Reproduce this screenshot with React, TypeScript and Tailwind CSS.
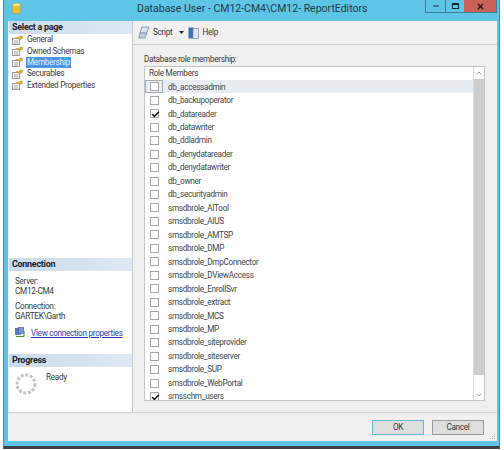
import React from "react";
import { Check, ChevronUp, ChevronDown, X, Minus } from "lucide-react";

const PAGES = ["General", "Owned Schemas", "Membership", "Securables", "Extended Properties"];

const ROLES = [
  ["db_accessadmin", false],
  ["db_backupoperator", false],
  ["db_datareader", true],
  ["db_datawriter", false],
  ["db_ddladmin", false],
  ["db_denydatareader", false],
  ["db_denydatawriter", false],
  ["db_owner", false],
  ["db_securityadmin", false],
  ["smsdbrole_AITool", false],
  ["smsdbrole_AIUS", false],
  ["smsdbrole_AMTSP", false],
  ["smsdbrole_DMP", false],
  ["smsdbrole_DmpConnector", false],
  ["smsdbrole_DViewAccess", false],
  ["smsdbrole_EnrollSvr", false],
  ["smsdbrole_extract", false],
  ["smsdbrole_MCS", false],
  ["smsdbrole_MP", false],
  ["smsdbrole_siteprovider", false],
  ["smsdbrole_siteserver", false],
  ["smsdbrole_SUP", false],
  ["smsdbrole_WebPortal", false],
  ["smsschm_users", true],
] as const;

function PageIcon() {
  return (
    <svg width="11" height="10" viewBox="0 0 11 10" className="shrink-0">
      <rect x="0.5" y="3.5" width="7" height="6" fill="#f4f4f4" stroke="#9a9a9a" />
      <path d="M2 6h4M2 8h4" stroke="#aaa" />
      <path d="M4 2.5h3l1-1.5h2.5v2.5l-2.5 1L7 3.5H4z" fill="#d8b03a" stroke="#a98a2a" strokeWidth="0.4" />
    </svg>
  );
}

function SectionHead({ children }: { children: React.ReactNode }) {
  return (
    <div className="h-[13px] shrink-0 pl-[3px] bg-gradient-to-r from-[#c9dbea] to-[#dfe9f2] text-[9px] leading-[13px] font-bold text-[#222]">
      {children}
    </div>
  );
}

export default function App() {
  return (
    <div className="w-[504px] h-[450px] bg-white font-['Roboto',sans-serif] tracking-[-0.3px] text-[#3a3a3a] overflow-hidden">
      <div className="relative ml-[3px] w-[497px] h-[449px] bg-[#5fc5e6] border-b-[3px] border-l border-r border-l-[#4d8aa5] border-r-[#4d8aa5] border-b-[#3c4044] flex flex-col">
        {/* title bar */}
        <div className="h-[21px] flex items-start shrink-0">
          <svg width="9" height="11" viewBox="0 0 9 11" className="ml-[8px] mt-[3px] shrink-0">
            <rect x="0.3" y="0.5" width="8.4" height="10" rx="2" fill="#e8bf3c" stroke="#b58f20" strokeWidth="0.5" />
            <ellipse cx="4.5" cy="1.8" rx="3.6" ry="1.2" fill="#f6e6a0" />
          </svg>
          <div className="flex-1 text-[10.5px] tracking-normal leading-[18px] text-[#1f3b47] pl-[116px]">
            Database User - CM12-CM4\CM12- ReportEditors
          </div>
          <div className="flex items-stretch h-[13px] mr-[2px] border border-t-0 border-[#3b7f96]">
            <div className="w-[20px] grid place-items-center border-r border-[#3b7f96]">
              <Minus size={8} strokeWidth={3} className="text-[#16242b]" />
            </div>
            <div className="w-[18px] grid place-items-center">
              <div className="w-[7px] h-[6px] border border-t-2 border-[#16242b]" />
            </div>
            <div className="w-[32px] grid place-items-center bg-[#c9605a]">
              <X size={9} strokeWidth={3.5} className="text-[#2a1412]" />
            </div>
          </div>
        </div>

        {/* client area */}
        <div className="flex-1 ml-[4px] mr-[2px] mb-[5px] bg-[#f0f0f0] flex flex-col min-h-0">
          <div className="flex-1 flex min-h-0">
            {/* left pane */}
            <div className="w-[125px] shrink-0 bg-white border-l border-l-[#f0f0f0] border-r border-r-[#c8c8c8] flex flex-col">
              <SectionHead>Select a page</SectionHead>
              <div className="flex flex-col">
                {PAGES.map((p) => (
                  <div key={p} className="h-[11.4px] flex items-center pl-[3px] gap-[3px] text-[8.2px]">
                    <PageIcon />
                    <span className={p === "Membership" ? "bg-[#4a96e2] text-[#e8f2fb] px-[1px] leading-[11px]" : "px-[1px] leading-[11px]"}>
                      {p}
                    </span>
                  </div>
                ))}
              </div>
              <div className="flex-1" />
              <SectionHead>Connection</SectionHead>
              <div className="pl-[6px] pt-[5px] text-[8.2px] leading-[10px]">
                <div>Server:</div>
                <div>CM12-CM4</div>
                <div className="mt-[5px]">Connection:</div>
                <div>GARTEK\Garth</div>
                <div className="mt-[6px] flex items-center gap-[5px]">
                  <svg width="11" height="11" viewBox="0 0 11 11" className="shrink-0">
                    <rect x="0.5" y="1.5" width="5" height="6" fill="#5a78c8" stroke="#3a4f9a" strokeWidth="0.6" />
                    <rect x="3.5" y="0.5" width="5" height="6" fill="#7d9ae0" stroke="#3a4f9a" strokeWidth="0.6" />
                    <path d="M1 9.5h8M9 4v5.5" stroke="#4f9a3a" strokeWidth="1.2" />
                  </svg>
                  <span className="text-[#2d3fa8] underline whitespace-nowrap">View connection properties</span>
                </div>
              </div>
              <div className="h-[16px] shrink-0" />
              <SectionHead>Progress</SectionHead>
              <div className="h-[45px] shrink-0 flex items-start pl-[6px] pt-[6px]">
                <svg width="22" height="22" viewBox="0 0 22 22" className="shrink-0">
                  <circle cx="11" cy="11" r="9" fill="none" stroke="#c4c4c4" strokeWidth="3" strokeDasharray="3 1.6" />
                </svg>
                <span className="ml-[9px] -mt-[1px] text-[8.2px] leading-[10px]">Ready</span>
              </div>
            </div>

            {/* right pane */}
            <div className="flex-1 min-w-0 flex flex-col">
              <div className="h-[24px] shrink-0 border-b border-[#cfcfcf] flex items-center pl-[5px] text-[8.2px]">
                <svg width="12" height="13" viewBox="0 0 12 13" className="shrink-0">
                  <path d="M4 1h7L8.5 7H2z" fill="#dfe3ea" stroke="#7f8aa0" strokeWidth="0.8" />
                  <path d="M2 7h7l-2 5H0.8z" fill="#c5ccd8" stroke="#7f8aa0" strokeWidth="0.8" />
                </svg>
                <span className="ml-[3px]">Script</span>
                <svg width="5" height="3" viewBox="0 0 5 3" className="ml-[7px] shrink-0">
                  <path d="M0 0h5L2.5 3z" fill="#222" />
                </svg>
                <svg width="11" height="12" viewBox="0 0 11 12" className="ml-[4px] shrink-0">
                  <rect x="0.5" y="0.5" width="5" height="11" fill="#3f6fb5" />
                  <rect x="5" y="1.5" width="5.5" height="10" fill="#dfe6f0" stroke="#7a8aa5" strokeWidth="0.7" />
                </svg>
                <span className="ml-[3px]">Help</span>
              </div>
              <div className="flex-1 min-h-0 flex flex-col pl-[11px] pr-[12px] pt-[9px] pb-[11px]">
                <div className="text-[8.2px] leading-[10px] h-[12px]">Database role membership:</div>
                <div className="flex-1 min-h-0 flex bg-white border border-[#c4c4c4]">
                  <div className="flex-1 min-w-0 flex flex-col overflow-hidden">
                    <div className="h-[13px] shrink-0 pl-[4px] text-[8.2px] leading-[13px]">Role Members</div>
                    <div className="flex flex-col">
                      {ROLES.map(([name, on], i) => (
                        <div key={name} className={i === 0 ? "h-[13.48px] shrink-0 flex items-center text-[8.2px] bg-[#e9edf1]" : "h-[13.48px] shrink-0 flex items-center text-[8.2px]"}>
                          <div className={i === 0 ? "w-[18px] h-full border border-[#a8a8a8] grid place-items-center" : "w-[18px] h-full grid place-items-center"}>
                            <div className="w-[9px] h-[9px] border border-[#a8a8a8] bg-white grid place-items-center">
                              {on && <Check size={9} strokeWidth={4} className="text-[#111]" />}
                            </div>
                          </div>
                          <span className="ml-[5px] text-[#444]">{name}</span>
                        </div>
                      ))}
                    </div>
                  </div>
                  <div className="w-[11px] shrink-0 border-l border-[#dcdcdc] flex flex-col">
                    <div className="h-[12px] grid place-items-center">
                      <ChevronUp size={8} className="text-[#666]" />
                    </div>
                    <div className="flex-1 bg-[#cdcdcd]" />
                    <div className="h-[15px]" />
                    <div className="h-[10px] grid place-items-center">
                      <ChevronDown size={8} className="text-[#666]" />
                    </div>
                  </div>
                </div>
              </div>
            </div>
          </div>

          {/* button bar */}
          <div className="h-[29px] shrink-0 border-t border-[#d2d2d2] flex items-start justify-end pt-[7px] pr-[13px] gap-[8px] text-[8.2px]">
            <div className="w-[52px] h-[15px] bg-[#dedede] border border-[#6fb6d2] grid place-items-center">OK</div>
            <div className="w-[52px] h-[15px] bg-[#dedede] border border-[#9a9a9a] grid place-items-center">Cancel</div>
          </div>
        </div>

        {/* resize grip */}
        <svg width="6" height="6" viewBox="0 0 6 6" className="absolute right-[3px] bottom-[6px]">
          <path d="M4 0h1v1H4zM2 2h1v1H2zM4 2h1v1H4zM0 4h1v1H0zM2 4h1v1H2zM4 4h1v1H4z" fill="#bcbcbc" />
        </svg>
      </div>
    </div>
  );
}
